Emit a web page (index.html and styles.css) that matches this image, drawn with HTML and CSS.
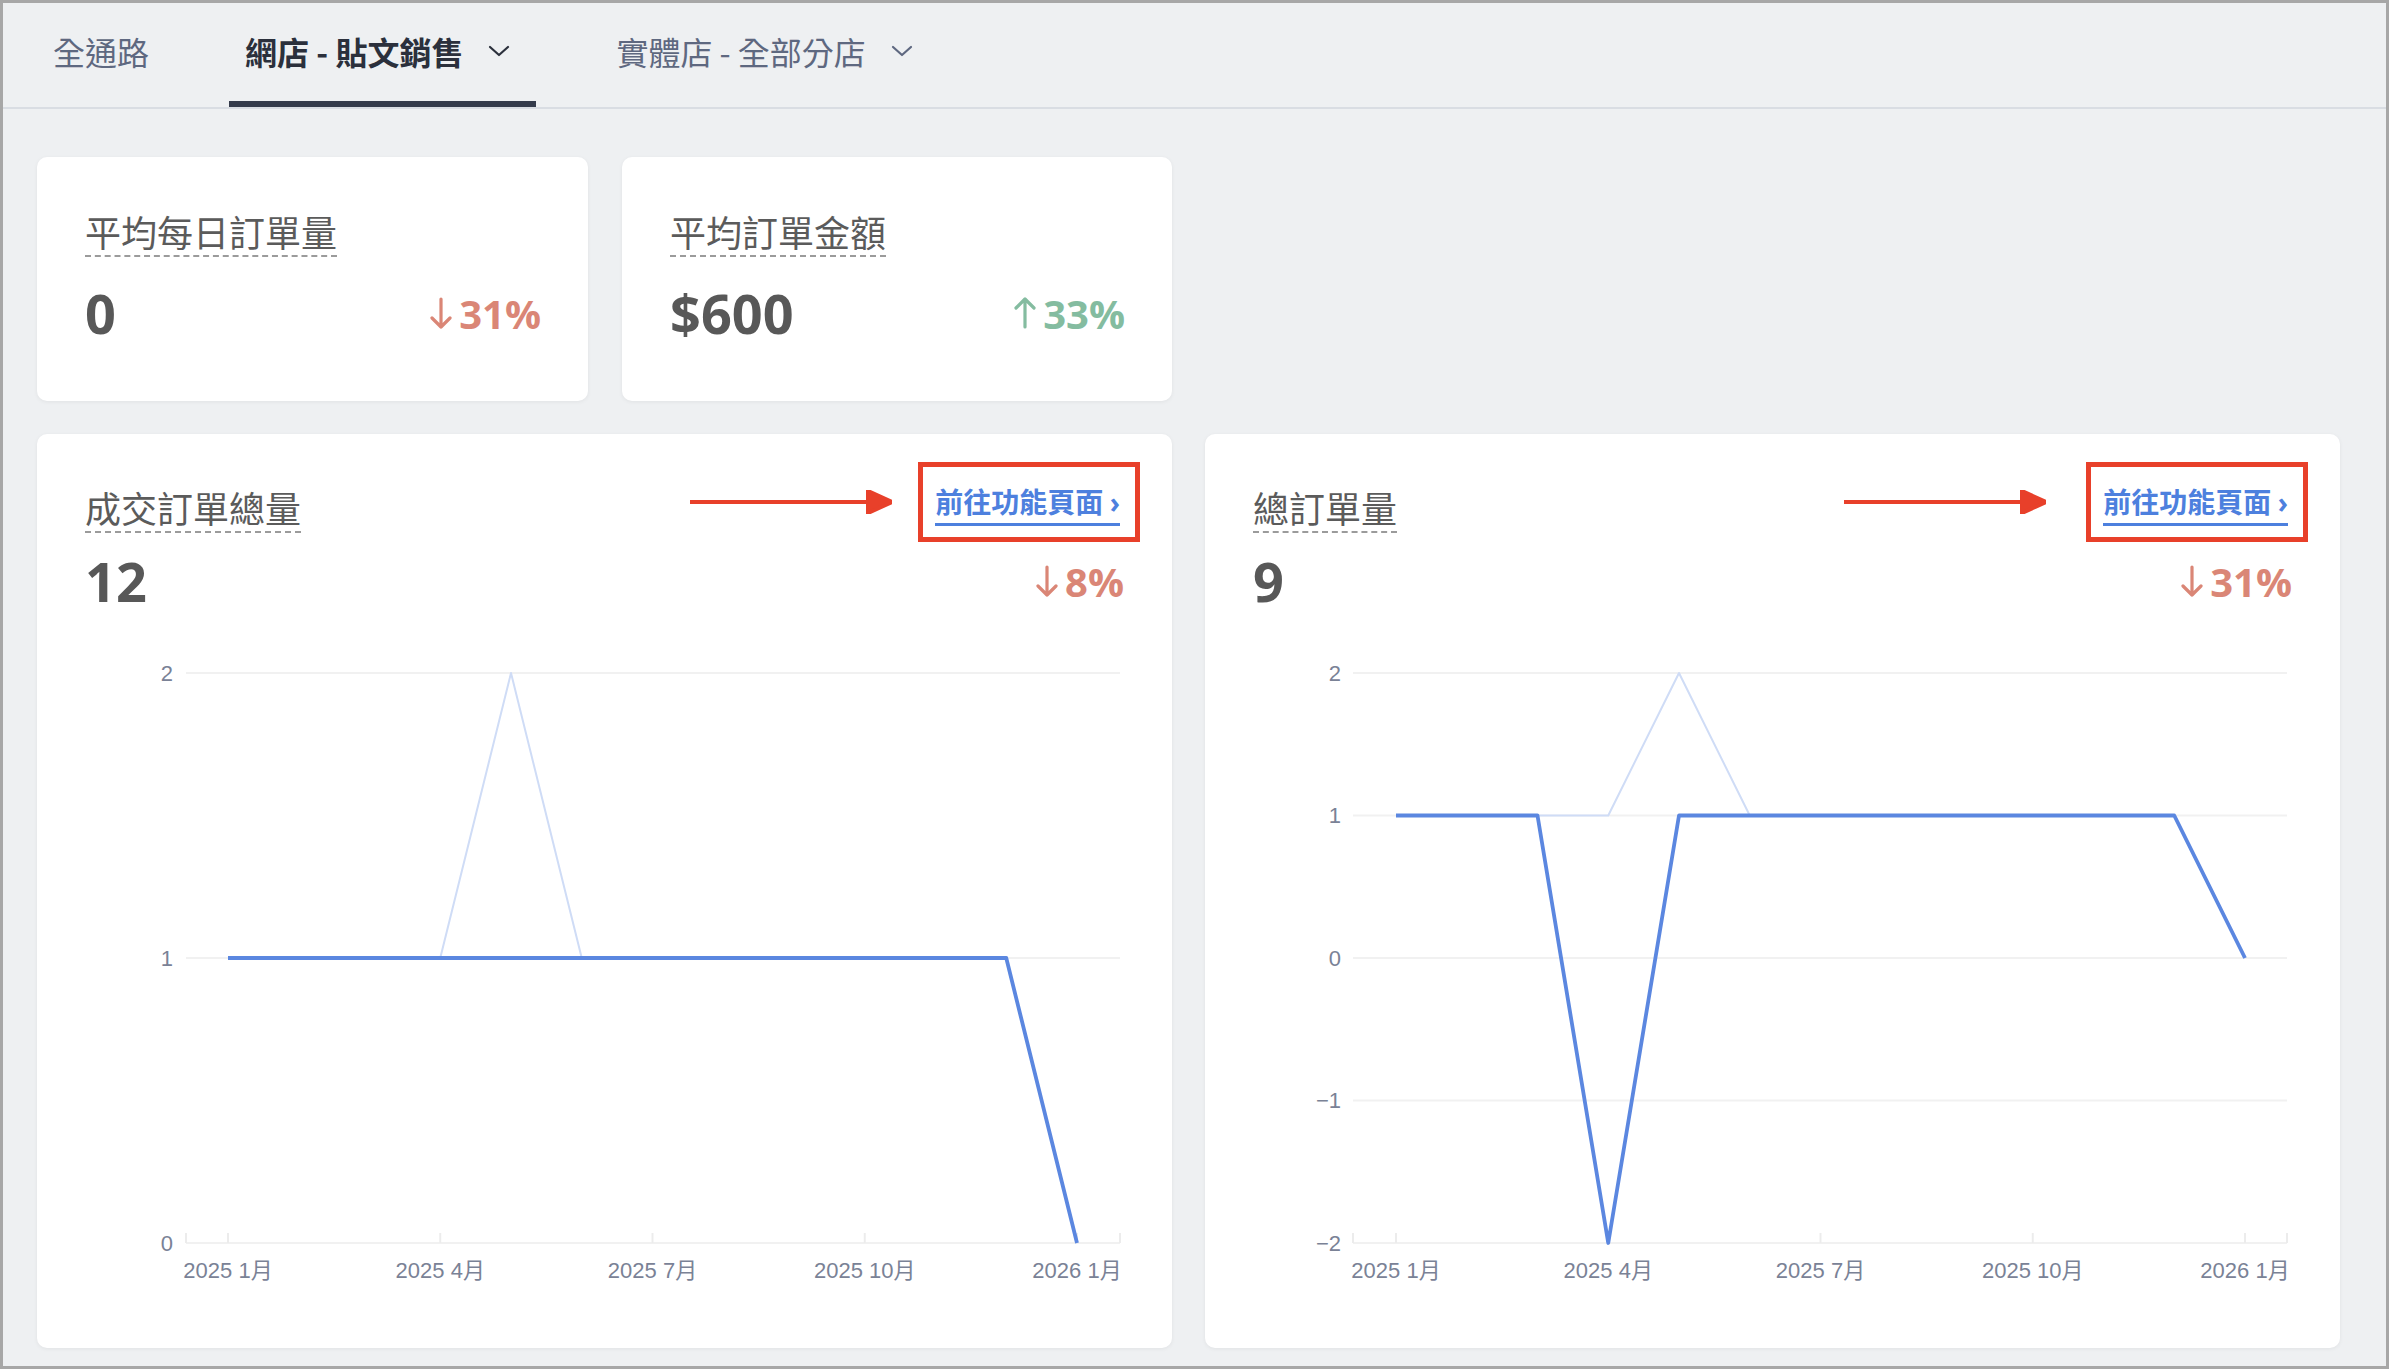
FILE: index.html
```html
<!DOCTYPE html>
<html lang="zh-Hant">
<head>
  <meta charset="UTF-8" />
  <meta name="viewport" content="width=device-width, initial-scale=1.0"/>
  <title>銷售總覽</title>
  <link rel="stylesheet" href="styles.css">
</head>
<body>
  <div class="frame">
    <nav class="tabs">
      <div class="tab">全通路</div>
      <div class="tab active">網店 - 貼文銷售
        <svg class="chev" viewBox="0 0 22 12"><path d="M2 2 L11 10 L20 2"/></svg>
      </div>
      <div class="tab">實體店 - 全部分店
        <svg class="chev" viewBox="0 0 22 12"><path d="M2 2 L11 10 L20 2"/></svg>
      </div>
    </nav>

    <main class="content">
      <section class="summary">
        <div class="card stat">
          <span class="label">平均每日訂單量</span>
          <div class="metric">
            <span class="num">0</span>
            <span class="delta down">
              <svg viewBox="0 0 24 32"><path d="M12 2 V30 M3 21 L12 30 L21 21"/></svg>31%
            </span>
          </div>
        </div>
        <div class="card stat">
          <span class="label">平均訂單金額</span>
          <div class="metric">
            <span class="num">$600</span>
            <span class="delta up">
              <svg viewBox="0 0 24 32"><path d="M12 30 V2 M3 11 L12 2 L21 11"/></svg>33%
            </span>
          </div>
        </div>
      </section>

      <section class="charts">
        <!-- closed orders -->
        <div class="card chart-card">
          <div class="chart-head">
            <span class="label">成交訂單總量</span>
            <div class="shortcut">
              <svg class="pointer" viewBox="0 0 202 24"><line x1="0" y1="12" x2="182" y2="12"/><polygon points="178,1 202,12 178,23"/></svg>
              <div class="link-box"><a class="go-link" href="#">前往功能頁面 <span class="caret">›</span></a></div>
            </div>
          </div>
          <div class="metric">
            <span class="num">12</span>
            <span class="delta down">
              <svg viewBox="0 0 24 32"><path d="M12 2 V30 M3 21 L12 30 L21 21"/></svg>8%
            </span>
          </div>
          <svg class="chart" viewBox="0 0 1039 660">
            <g class="grid">
              <line x1="101" y1="42" x2="1035" y2="42"/>
              <line x1="101" y1="327" x2="1035" y2="327"/>
              <line x1="101" y1="612" x2="1035" y2="612"/>
            </g>
            <g class="ticks">
              <line x1="101" y1="602" x2="101" y2="612"/>
              <line x1="143" y1="602" x2="143" y2="612"/>
              <line x1="355.25" y1="602" x2="355.25" y2="612"/>
              <line x1="567.5" y1="602" x2="567.5" y2="612"/>
              <line x1="779.75" y1="602" x2="779.75" y2="612"/>
              <line x1="992" y1="602" x2="992" y2="612"/>
              <line x1="1035" y1="602" x2="1035" y2="612"/>
            </g>
            <g class="y-labels">
              <text x="88" y="42">2</text>
              <text x="88" y="327">1</text>
              <text x="88" y="612">0</text>
            </g>
            <g class="x-labels">
              <text x="143" y="639">2025 1月</text>
              <text x="355.25" y="639">2025 4月</text>
              <text x="567.5" y="639">2025 7月</text>
              <text x="779.75" y="639">2025 10月</text>
              <text x="992" y="639">2026 1月</text>
            </g>
            <path class="line-prev" d="M143 327 L355.25 327 L426 42 L496.75 327 L921.25 327"/>
            <path class="line-main" d="M143 327 L921.25 327 L992 612"/>
          </svg>
        </div>

        <!-- all orders -->
        <div class="card chart-card">
          <div class="chart-head">
            <span class="label">總訂單量</span>
            <div class="shortcut wide">
              <svg class="pointer" viewBox="0 0 202 24"><line x1="0" y1="12" x2="182" y2="12"/><polygon points="178,1 202,12 178,23"/></svg>
              <div class="link-box"><a class="go-link" href="#">前往功能頁面 <span class="caret">›</span></a></div>
            </div>
          </div>
          <div class="metric">
            <span class="num">9</span>
            <span class="delta down">
              <svg viewBox="0 0 24 32"><path d="M12 2 V30 M3 21 L12 30 L21 21"/></svg>31%
            </span>
          </div>
          <svg class="chart" viewBox="0 0 1039 660">
            <g class="grid">
              <line x1="100" y1="42" x2="1034" y2="42"/>
              <line x1="100" y1="184.5" x2="1034" y2="184.5"/>
              <line x1="100" y1="327" x2="1034" y2="327"/>
              <line x1="100" y1="469.5" x2="1034" y2="469.5"/>
              <line x1="100" y1="612" x2="1034" y2="612"/>
            </g>
            <g class="ticks">
              <line x1="100" y1="602" x2="100" y2="612"/>
              <line x1="143" y1="602" x2="143" y2="612"/>
              <line x1="355.25" y1="602" x2="355.25" y2="612"/>
              <line x1="567.5" y1="602" x2="567.5" y2="612"/>
              <line x1="779.75" y1="602" x2="779.75" y2="612"/>
              <line x1="992" y1="602" x2="992" y2="612"/>
              <line x1="1034" y1="602" x2="1034" y2="612"/>
            </g>
            <g class="y-labels">
              <text x="88" y="42">2</text>
              <text x="88" y="184.5">1</text>
              <text x="88" y="327">0</text>
              <text x="88" y="469.5">−1</text>
              <text x="88" y="612">−2</text>
            </g>
            <g class="x-labels">
              <text x="143" y="639">2025 1月</text>
              <text x="355.25" y="639">2025 4月</text>
              <text x="567.5" y="639">2025 7月</text>
              <text x="779.75" y="639">2025 10月</text>
              <text x="992" y="639">2026 1月</text>
            </g>
            <path class="line-prev" d="M143 184.5 L355.25 184.5 L426 42 L496.75 184.5 L921.25 184.5"/>
            <path class="line-main" d="M143 184.5 L284.5 184.5 L355.25 612 L426 184.5 L921.25 184.5 L992 327"/>
          </svg>
        </div>
      </section>
    </main>
  </div>
</body>
</html>
```

FILE: styles.css
```css
* {
  box-sizing: border-box;
}

html, body {
  margin: 0;
  height: 100%;
}

body {
  font-family: "Noto Sans CJK TC", "Noto Sans", sans-serif;
  background-color: #eef0f2;
}

.frame {
  height: 100vh;
  border: 3px solid #a7a7a7;
  overflow: hidden;
}

/* top tabs */
.tabs {
  display: flex;
  gap: 64px;
  height: 106px;
  padding-left: 34px;
  border-bottom: 2px solid #d9dde3;
}

.tab {
  display: flex;
  align-items: center;
  padding: 0 16px 3px;
  border-bottom: 6px solid transparent;
  font-size: 32px;
  color: #5e6880;
  cursor: pointer;
}

.tab.active {
  color: #2b303c;
  font-weight: 700;
  border-bottom-color: #343b4b;
}

.chev {
  width: 22px;
  height: 12px;
  margin-left: 25px;
  margin-right: 10px;
  fill: none;
  stroke: currentColor;
  stroke-width: 2.2;
  stroke-linecap: round;
  stroke-linejoin: round;
}

.content {
  padding: 48px 0 0 34px;
}

.summary {
  display: grid;
  grid-template-columns: 551px 550px;
  gap: 34px;
}

.charts {
  display: grid;
  grid-template-columns: 1135px 1135px;
  gap: 33px;
  margin-top: 33px;
}

.card {
  background: white;
  border-radius: 10px;
  box-shadow: 0 1px 4px rgba(0, 0, 0, 0.06);
}

.stat {
  height: 244px;
  padding: 53px 47px 0 48px;
  display: flex;
  flex-direction: column;
  align-items: flex-start;
}

.label {
  font-size: 36px;
  line-height: 43px;
  color: #5b5b5b;
  padding-bottom: 2px;
  border-bottom: 2px dashed #9b9b9b;
}

.metric {
  align-self: stretch;
  display: flex;
  justify-content: space-between;
  align-items: center;
  height: 64px;
  margin-top: 24px;
}

.num {
  font-family: "Open Sans", sans-serif;
  font-weight: 700;
  font-size: 54px;
  line-height: 64px;
  color: #585858;
}

.delta {
  display: flex;
  align-items: center;
  gap: 6px;
  font-family: "Open Sans", sans-serif;
  font-weight: 700;
  font-size: 40px;
}

.delta svg {
  width: 24px;
  height: 32px;
  fill: none;
  stroke: currentColor;
  stroke-width: 3.2;
  stroke-linecap: round;
  stroke-linejoin: round;
}

.down {
  color: #da8676;
}

.up {
  color: #84bca0;
}

/* chart cards */
.chart-card {
  height: 914px;
  padding: 28px 48px 0;
}

.chart-head {
  display: flex;
  justify-content: space-between;
  align-items: flex-end;
}

.chart-head .label {
  margin-bottom: 9px;
}

.chart-card .metric {
  margin-top: 7px;
}

.shortcut {
  display: flex;
  align-items: center;
  gap: 26px;
  margin-right: -16px;
}

.shortcut.wide {
  gap: 40px;
}

.pointer {
  width: 202px;
  height: 24px;
  stroke: #e8402a;
  stroke-width: 4;
  fill: #e8402a;
}

.link-box {
  border: 5px solid #e8402a;
  padding: 16px 15px 11px 12px;
}

.go-link {
  display: block;
  font-size: 28px;
  line-height: 36px;
  font-weight: 700;
  color: #4d80de;
  text-decoration: none;
  padding-bottom: 3px;
  border-bottom: 3px solid #4d80de;
}

.caret {
  font-family: "Open Sans", sans-serif;
}

.chart {
  display: block;
  width: 1039px;
  height: 660px;
  margin-top: 18px;
}

.grid line {
  stroke: #f1f1f1;
  stroke-width: 2;
}

.ticks line {
  stroke: #ececec;
  stroke-width: 2;
}

.chart text {
  font-family: "Liberation Sans", "Noto Sans CJK TC", sans-serif;
  font-size: 22px;
  fill: #7a8296;
  dominant-baseline: central;
}

.y-labels text {
  text-anchor: end;
}

.x-labels text {
  text-anchor: middle;
}

.line-prev {
  fill: none;
  stroke: #cfdcf6;
  stroke-width: 2;
  stroke-linejoin: round;
}

.line-main {
  fill: none;
  stroke: #5b87e0;
  stroke-width: 3.8;
  stroke-linejoin: round;
}
```
